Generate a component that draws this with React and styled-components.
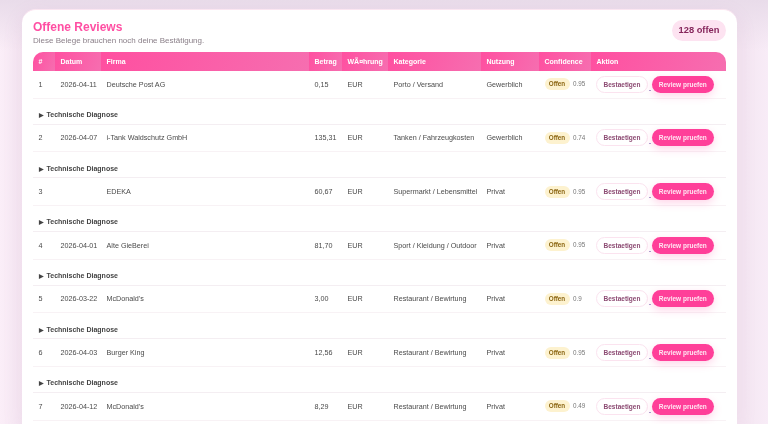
import React from 'react'
import styled, { createGlobalStyle } from 'styled-components'

const GlobalStyle = createGlobalStyle`
  html, body {
    margin: 0;
    height: 424px;
    overflow: hidden;
    font-family: "Liberation Sans", Arial, sans-serif;
    background:
      linear-gradient(180deg, #e9dcea 0%, rgba(233, 220, 234, 0) 12%),
      linear-gradient(90deg, #fbeef8 0%, #f4e6f2 3%, #f4e6f2 97%, #f8ecf7 100%);
  }
`

const Page = styled.div`
  padding: 9px 31px 0 22px;
`

const Card = styled.section`
  background: #fff;
  border-top: 1px solid #fbe6f1;
  border-radius: 14px 14px 0 0;
  padding: 10px 11px 0;
  height: 415px;
  box-sizing: border-box;
  overflow: hidden;
  box-shadow: 0 6px 20px rgba(190, 120, 170, 0.12);
  filter: blur(0.25px);
`

const Head = styled.header`
  display: flex;
  justify-content: space-between;
  align-items: flex-start;
  height: 32px;
`

const Title = styled.h2`
  margin: 0;
  color: #ff4fa3;
  font-size: 12px;
  line-height: 14px;
  font-weight: 700;
`

const Sub = styled.p`
  margin: 1px 0 0;
  color: #8a7f88;
  font-size: 8px;
  line-height: 12px;
`

const Count = styled.div`
  background: #fde3f1;
  color: #86265c;
  border-radius: 11px;
  width: 54px;
  height: 21px;
  line-height: 21px;
  text-align: center;
  font-size: 9.3px;
  font-weight: 700;
`

const Table = styled.table`
  width: 693px;
  table-layout: fixed;
  border-collapse: separate;
  border-spacing: 0;
  font-size: 7.2px;
  color: #4a4a4a;
`

const Th = styled.th`
  box-sizing: border-box;
  height: 19px;
  padding: 0 0 0 5.5px;
  text-align: left;
  color: #fff;
  font-size: 7px;
  font-weight: 700;
  background: linear-gradient(110deg, #ff4fa0, #f66eb0);
  &:first-child { border-top-left-radius: 10px; }
  &:last-child { border-top-right-radius: 10px; }
`

const Td = styled.td`
  box-sizing: border-box;
  height: 27.67px;
  padding: 0 0 0 5.5px;
  border-bottom: 1px solid #f8f2f5;
  white-space: nowrap;
`

const DiagCell = styled.td`
  box-sizing: border-box;
  height: 26px;
  padding: 7px 0 0 5.5px;
  border-bottom: 1px solid #f4eef2;
  color: #444;
  font-size: 7px;
  font-weight: 700;
`

const Arrow = styled.span`
  display: inline-block;
  margin-right: 3px;
  font-size: 5.5px;
`

const Status = styled.span`
  display: inline-block;
  background: #fdf2cf;
  color: #8a6410;
  border-radius: 7px;
  height: 12px;
  line-height: 12px;
  width: 25px;
  text-align: center;
  font-size: 6.3px;
  font-weight: 700;
`

const Score = styled.span`
  margin-left: 3.5px;
  color: #777;
  font-size: 6.3px;
`

const Actions = styled.div`
  display: flex;
  align-items: center;
  margin-left: -0.5px;
`

const Spacer = styled.span`
  align-self: flex-end;
  width: 2.5px;
  margin: 0 0.5px 2px 0.5px;
  border-bottom: 1px solid #a79fd0;
`

const Button = styled.button`
  box-sizing: border-box;
  height: 17px;
  width: ${p => (p.$primary ? '62.5px' : '52px')};
  padding: 0;
  border-radius: 9px;
  border: ${p => (p.$primary ? 'none' : '1px solid #fbe3ef')};
  background: ${p => (p.$primary ? '#ff3f99' : '#fff')};
  color: ${p => (p.$primary ? '#ffe6f2' : '#8c4a72')};
  box-shadow: ${p => (p.$primary ? '0 3px 8px rgba(255,63,153,.22)' : 'none')};
  font-family: inherit;
  font-size: 6.5px;
  font-weight: 700;
`

const columns = [
  ['#', 22], ['Datum', 46], ['Firma', 208], ['Betrag', 33], ['WÃ¤hrung', 46],
  ['Kategorie', 93], ['Nutzung', 58], ['Confidence', 52], ['Aktion', 135],
]

const rows = [
  [1, '2026-04-11', 'Deutsche Post AG', '0,15', 'Porto / Versand', 'Gewerblich', '0.95'],
  [2, '2026-04-07', 'i-Tank Waldschutz GmbH', '135,31', 'Tanken / Fahrzeugkosten', 'Gewerblich', '0.74'],
  [3, '', 'EDEKA', '60,67', 'Supermarkt / Lebensmittel', 'Privat', '0.95'],
  [4, '2026-04-01', 'Alte GieBerei', '81,70', 'Sport / Kleidung / Outdoor', 'Privat', '0.95'],
  [5, '2026-03-22', "McDonald's", '3,00', 'Restaurant / Bewirtung', 'Privat', '0.9'],
  [6, '2026-04-03', 'Burger King', '12,56', 'Restaurant / Bewirtung', 'Privat', '0.95'],
  [7, '2026-04-12', "McDonald's", '8,29', 'Restaurant / Bewirtung', 'Privat', '0.49'],
]

export default function App() {
  return (
    <Page>
      <GlobalStyle />
      <Card>
        <Head>
          <div>
            <Title>Offene Reviews</Title>
            <Sub>Diese Belege brauchen noch deine Bestätigung.</Sub>
          </div>
          <Count>128 offen</Count>
        </Head>
        <Table>
          <colgroup>
            {columns.map(([name, w]) => <col key={name} width={w} />)}
          </colgroup>
          <thead>
            <tr>{columns.map(([name]) => <Th key={name}>{name}</Th>)}</tr>
          </thead>
          <tbody>
            {rows.map((r, i) => (
              <React.Fragment key={r[0]}>
                <tr>
                  <Td>{r[0]}</Td>
                  <Td>{r[1]}</Td>
                  <Td>{r[2]}</Td>
                  <Td>{r[3]}</Td>
                  <Td>EUR</Td>
                  <Td>{r[4]}</Td>
                  <Td>{r[5]}</Td>
                  <Td><Status>Offen</Status><Score>{r[6]}</Score></Td>
                  <Td>
                    <Actions>
                      <Button>Bestaetigen</Button>
                      <Spacer />
                      <Button $primary>Review pruefen</Button>
                    </Actions>
                  </Td>
                </tr>
                {i < rows.length - 1 && (
                  <tr>
                    <DiagCell colSpan={9}><Arrow>▶</Arrow>Technische Diagnose</DiagCell>
                  </tr>
                )}
              </React.Fragment>
            ))}
          </tbody>
        </Table>
      </Card>
    </Page>
  )
}
